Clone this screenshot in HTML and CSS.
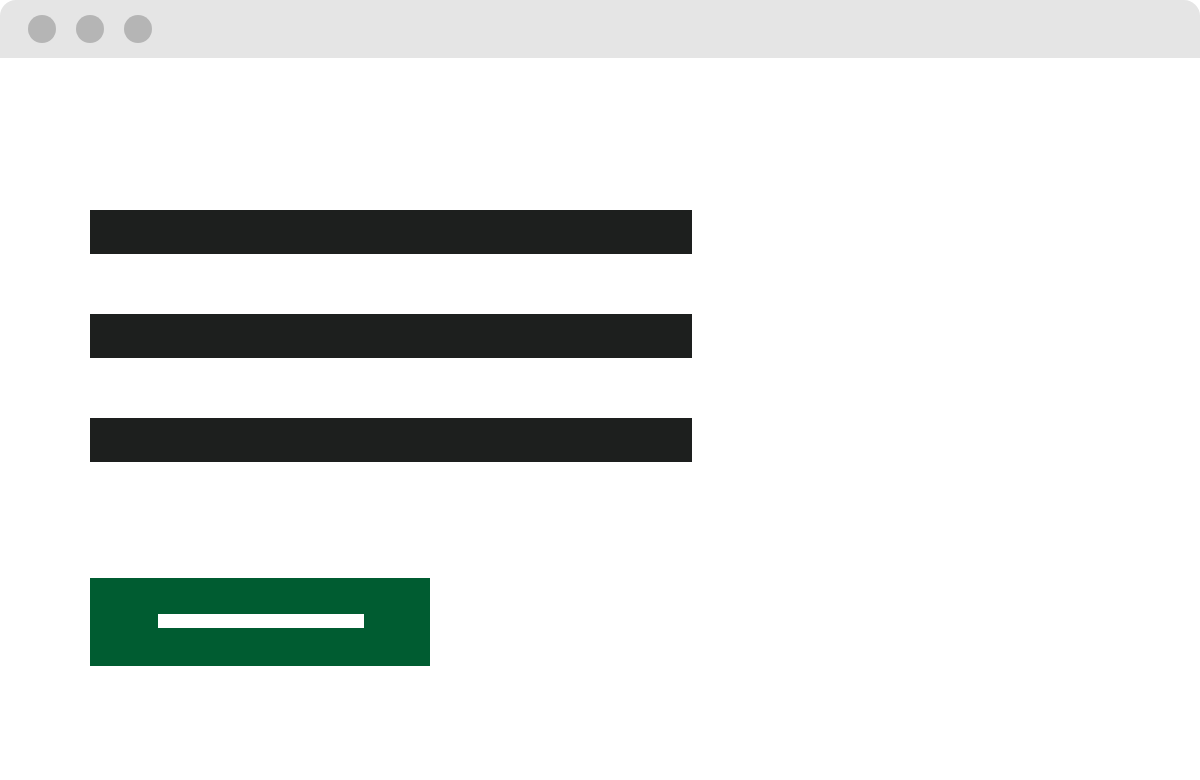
FILE: index.html
```html
<!DOCTYPE html>
<html>
<head>
<meta charset="utf-8">
<link rel="stylesheet" href="styles.css">
</head>
<body>
<div class="window">
  <header class="titlebar">
    <span class="dot"></span>
    <span class="dot"></span>
    <span class="dot"></span>
  </header>
  <main class="content">
    <div class="fields">
      <div class="field"></div>
      <div class="field"></div>
      <div class="field"></div>
    </div>
    <div class="button"><span class="button-label"></span></div>
  </main>
</div>
</body>
</html>
```
FILE: styles.css
```css
html, body {
  margin: 0;
  padding: 0;
  background: #ffffff;
  font-family: "Liberation Sans", Arial, sans-serif;
}
.window {
  width: 1200px;
  height: 780px;
  background: #ffffff;
}
.titlebar {
  height: 58px;
  box-sizing: border-box;
  background: #e5e5e5;
  border-radius: 16px 16px 0 0;
  display: flex;
  align-items: center;
  gap: 20px;
  padding-left: 28px;
}
.dot {
  width: 28px;
  height: 28px;
  border-radius: 50%;
  background: #b5b5b5;
}
.content {
  padding: 152px 0 0 90px;
  display: flex;
  flex-direction: column;
  align-items: flex-start;
}
.fields {
  display: flex;
  flex-direction: column;
  gap: 60px;
}
.field {
  width: 602px;
  height: 44px;
  background: #1d1f1e;
}
.button {
  margin-top: 116px;
  width: 340px;
  height: 88px;
  box-sizing: border-box;
  background: #005c31;
  padding: 36px 66px 38px 68px;
}
.button-label {
  display: block;
  width: 206px;
  height: 14px;
  background: #ffffff;
}
```
